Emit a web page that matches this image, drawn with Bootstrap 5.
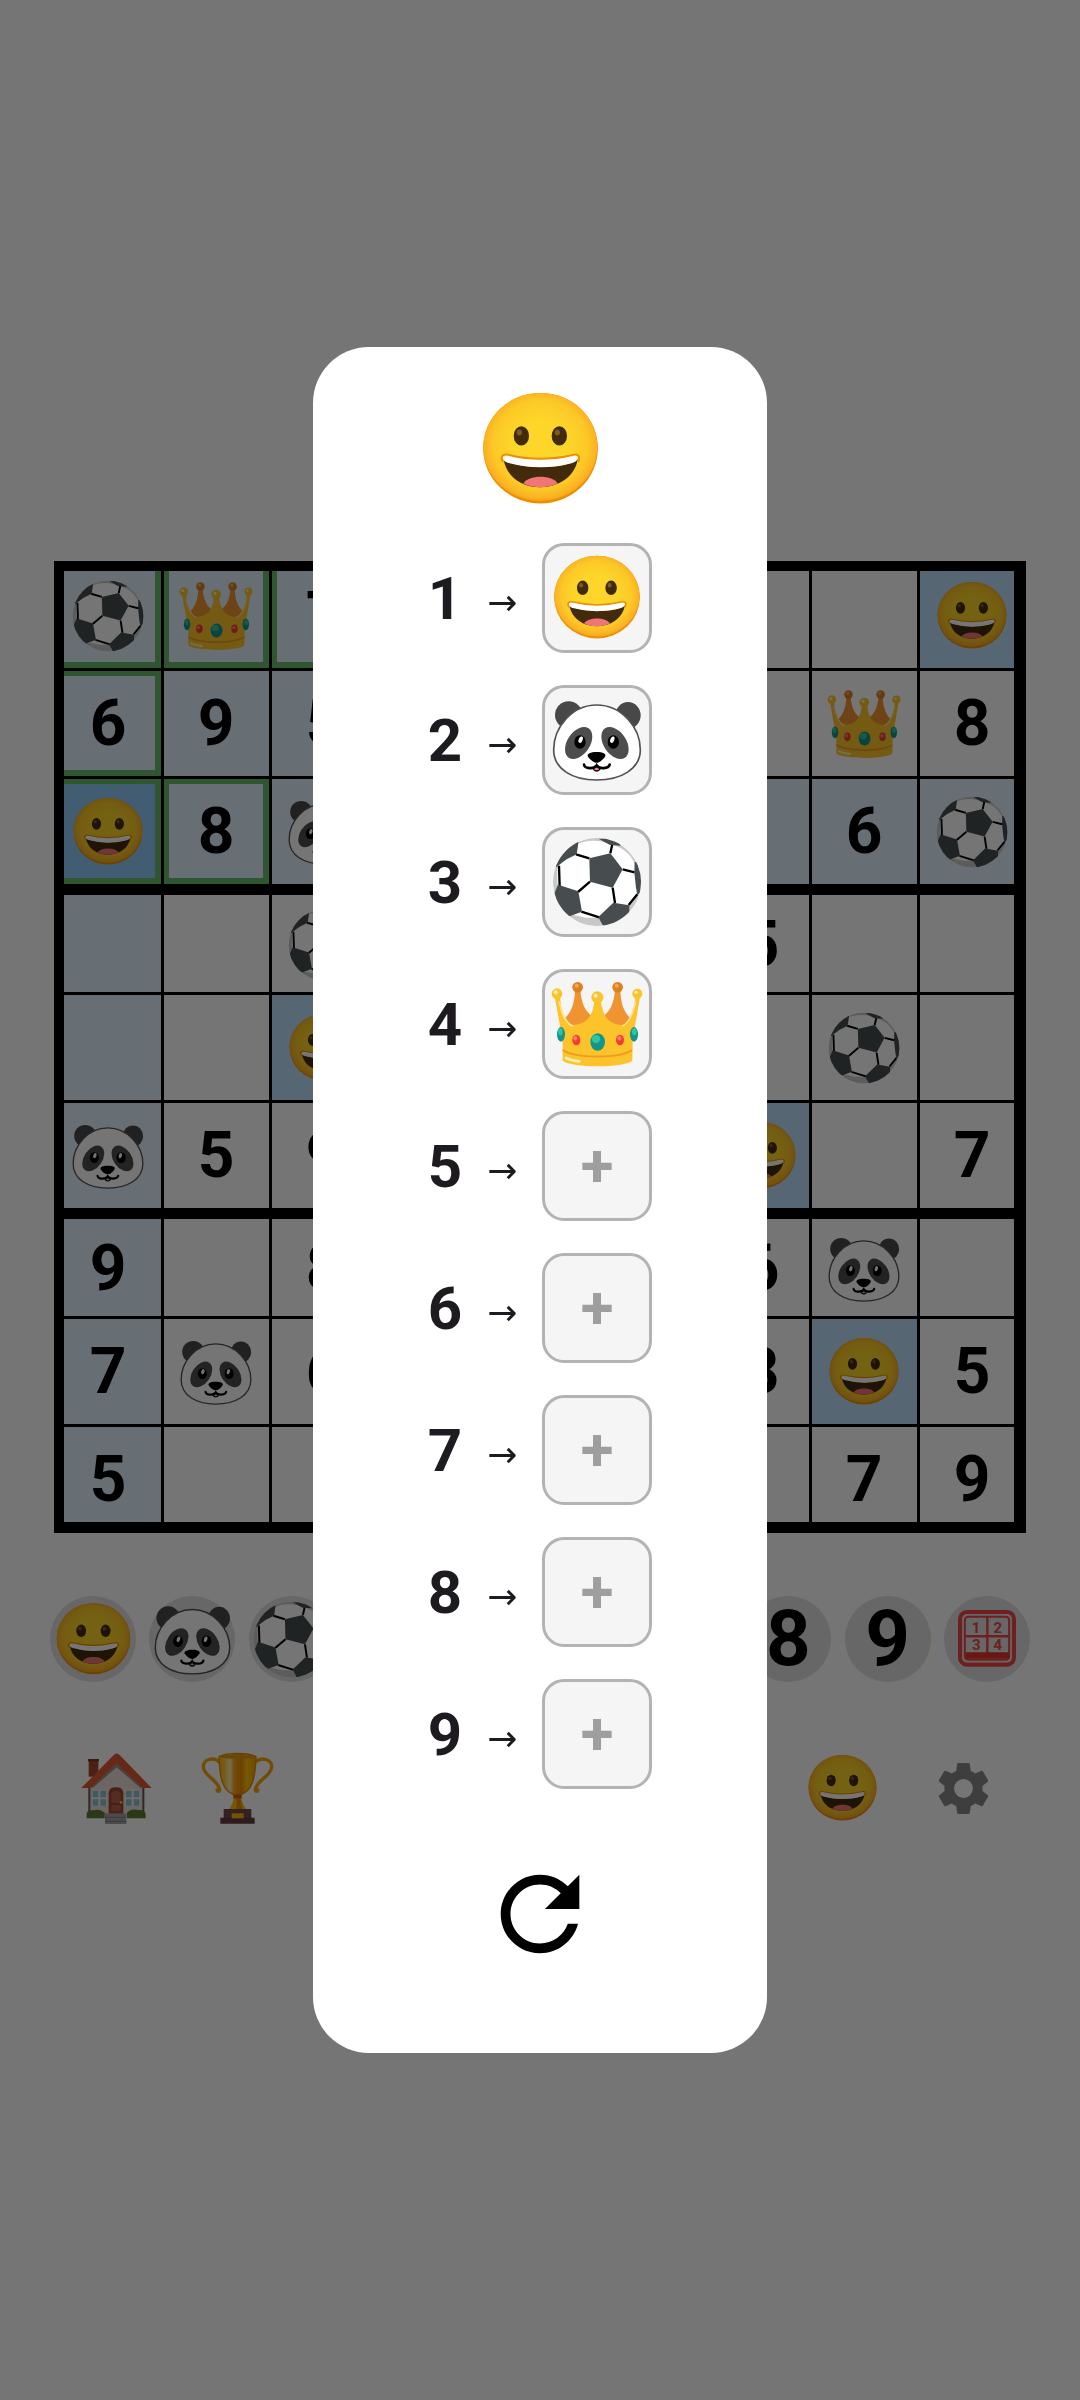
<!DOCTYPE html>
<html lang="en">
<head>
  <meta charset="UTF-8">
  <meta name="viewport" content="width=device-width, initial-scale=1">
  <title>Emoji Sudoku</title>
  <link href="https://cdn.jsdelivr.net/npm/bootstrap@5.3.3/dist/css/bootstrap.min.css" rel="stylesheet">
  <style>
    body { font-family: Roboto, "Liberation Sans", sans-serif; background: #fff; }
    button { background: none; border: 0; padding: 0; color: #000; }
    svg { display: block; }

    .board-wrap { padding: 0 54px; margin-bottom: 63px; }
    .board { display: grid; grid-template-columns: repeat(9, 1fr); }
    .cell {
      --t: 2px; --l: 2px; --b: -1px; --r: -1px; --ring: 0px;
      aspect-ratio: 1;
      display: flex; align-items: center; justify-content: center;
      font-size: 64px; font-weight: 700; line-height: 1;
      padding-top: 2px;
      box-shadow: inset var(--l) var(--t) #000, inset var(--r) var(--b) #000, inset 0 0 0 var(--ring) #66bb6a;
    }
    .cell svg { width: 74px; height: 74px; }
    .cell.top { --t: 10px; }
    .cell.left { --l: 10px; }
    .cell.pad-y { padding-top: 12px; }
    .cell.pad-x { padding-left: 10px; }
    .cell.last-row { --b: -11px; }
    .cell.last-col { --r: -12px; }
    .cell.peer { background: #e3f2fd; }
    .cell.same { background: #bbdefb; }
    .cell.picked { background: #90caf9; }
    .cell.ringed { --ring: 7px; }

    .keys { padding: 0 50px; margin-bottom: 55px; }
    .key {
      width: 86px; height: 86px; border-radius: 50%; background: #e0e0e0;
      display: flex; align-items: center; justify-content: center;
      font-size: 78px; font-weight: 700; line-height: 1;
    }
    .key svg { width: 79px; height: 79px; }
    .key .grid-icon { width: 58px; height: 58px; }

    .tools { padding: 0 56px; }
    .tool { width: 121px; height: 102px; display: flex; align-items: center; justify-content: center; }
    .tool svg { width: 73px; height: 73px; }
    .tool .gear { width: 61px; height: 61px; }

    .modal-backdrop.show { opacity: .54; }
    .picker { max-width: 454px; }
    .picker .modal-content { border: 0; border-radius: 56px; padding: 41px 0 80px; }
    .head-face { width: 123px; height: 123px; margin-bottom: 32px; }
    .maps { gap: 32px; margin-bottom: 66px; }
    .map-row { gap: 22px; color: #1d1b20; line-height: 1; }
    .map-num { font-size: 60px; font-weight: 700; padding-top: 2px; }
    .map-arrow { width: 36px; font-family: "DejaVu Sans", sans-serif; font-size: 36px; padding-top: 10px; text-align: center; }
    .slot {
      width: 110px; height: 110px; border: 3px solid #b3b3b3; border-radius: 22px; background: #f5f5f5;
      display: flex; align-items: center; justify-content: center;
      color: #9e9e9e; font-size: 60px; font-weight: 700; line-height: 1;
    }
    .slot svg { width: 92px; height: 92px; }
    .reset svg { width: 118px; height: 118px; }
  </style>
</head>
<body>

<svg width="0" height="0" class="position-absolute" aria-hidden="true">
  <defs>
    <radialGradient id="faceFill" cx=".5" cy=".48" r=".53">
      <stop offset=".45" stop-color="#fdd629"/>
      <stop offset=".78" stop-color="#fcc827"/>
      <stop offset=".94" stop-color="#fbb021"/>
      <stop offset="1" stop-color="#f79a1a"/>
    </radialGradient>
    <linearGradient id="cupFill">
      <stop offset="0" stop-color="#ffb300"/>
      <stop offset=".15" stop-color="#ffc93c"/>
      <stop offset=".3" stop-color="#fff0b8"/>
      <stop offset=".4" stop-color="#f9a825"/>
      <stop offset=".6" stop-color="#f08c00"/>
      <stop offset=".75" stop-color="#ffc107"/>
      <stop offset="1" stop-color="#f0a000"/>
    </linearGradient>
    <clipPath id="ballClip"><circle cx="133" cy="133" r="132"/></clipPath>
  </defs>

  <symbol id="face" viewBox="0 0 276 276">
    <g transform="translate(9 11) scale(.748)">
      <ellipse cx="172.500" cy="166" rx="172" ry="166" fill="#eb8f00"/>
      <ellipse cx="172" cy="162" rx="171" ry="162" fill="url(#faceFill)"/>
      <ellipse cx="115" cy="129" rx="23" ry="29" fill="#422b0d"/>
      <ellipse cx="229" cy="129" rx="23" ry="29" fill="#422b0d"/>
      <ellipse cx="109" cy="119" rx="8" ry="9" fill="#7a5c1e"/>
      <ellipse cx="223" cy="119" rx="8" ry="9" fill="#7a5c1e"/>
      <path d="M62 200C70 250 115 283 172 283S276 250 284 200C250 222 210 222 172 222S100 218 62 200z" fill="#422b0d"/>
      <path d="M121 272C135 245 210 245 224 272C192 287 152 287 121 272z" fill="#ef7674"/>
      <path d="M60 197C58 186 66 184 78 188Q172 210 268 188C280 184 287 186 284 197C282 205 275 208 265 211Q172 235 80 211C68 208 62 205 60 197z" fill="#fff"/>
      <path d="M59 205C50 188 64 182 78 186Q172 209 268 186C282 182 294 188 286 205" fill="none" stroke="#eb8f00" stroke-width="6" stroke-linecap="round"/>
    </g>
  </symbol>

  <symbol id="panda" viewBox="0 0 276 276">
    <g transform="translate(5 20)">
      <circle cx="48" cy="43" r="41" fill="#484848"/>
      <ellipse cx="226" cy="44" rx="38" ry="40" fill="#484848"/>
      <path d="M3 147C3 80 58 13 132 13S263 80 263 147C263 205 205 238 132 238S3 205 3 147z" fill="#fff" stroke="#525252" stroke-width="5"/>
      <ellipse cx="78" cy="127" rx="34" ry="53" transform="rotate(34 78 127)" fill="#4d4d4d"/>
      <ellipse cx="187" cy="127" rx="34" ry="53" transform="rotate(-34 187 127)" fill="#4d4d4d"/>
      <ellipse cx="82" cy="124" rx="17" ry="20" fill="#000"/>
      <ellipse cx="182" cy="124" rx="17" ry="20" fill="#000"/>
      <ellipse cx="84" cy="117" rx="6" ry="10" transform="rotate(20 84 117)" fill="#fff"/>
      <ellipse cx="179" cy="117" rx="6" ry="10" transform="rotate(20 179 117)" fill="#fff"/>
      <path d="M132 154C150 154 163 160 157 168C150 178 140 186 132 186S113 178 106 168C101 160 114 154 132 154z" fill="#000"/>
      <path d="M119 200Q132 194 145 200Q144 212 132 213Q120 212 119 200z" fill="#000"/>
      <path d="M124 204Q132 196 140 204Q139 209 132 209Q125 209 124 204z" fill="#f48a94"/>
      <path d="M94 192C96 205 125 206 132 194C139 206 168 205 171 192" fill="none" stroke="#000" stroke-width="8" stroke-linecap="round"/>
    </g>
  </symbol>

  <symbol id="ball" viewBox="0 0 276 276">
    <g transform="translate(5 5)" clip-path="url(#ballClip)">
      <circle cx="133" cy="133" r="133" fill="#c8c8c8"/>
      <path d="M72 20C100 6 145 6 172 20C205 25 235 50 246 78C258 110 262 150 248 180C230 215 190 238 140 240L100 240L52 230C20 190 10 150 15 88z" fill="#fff"/>
      <g fill="none" stroke="#000" stroke-width="7">
        <path d="M70 50L110 62M173 47L179 20M210 95L246 104M180 150L187 196M112 132L76 163M86 222L140 239M19 84L21 146M228 202L254 170"/>
      </g>
      <g fill="#474c4f">
        <path d="M110 62L173 47L210 95L180 150L112 132z"/>
        <path d="M78 10L72 50L42 65L8 90L0 60L50 0z"/>
        <path d="M16 141L77 161L88 222L44 238L0 230L4 170z"/>
        <path d="M137 238L182 195L230 203L230 245L153 268z"/>
        <path d="M246 73L268 75L270 160L254 172L250 150L245 105z"/>
        <path d="M138 3L205 0L203 24L172 22z"/>
      </g>
    </g>
  </symbol>

  <symbol id="crown" viewBox="0 0 276 276">
    <g transform="translate(3 12)">
      <path d="M69 24H85C88 60 98 90 125 105V150H30V115C60 95 68 60 69 24z" fill="#ef9430"/>
      <path d="M189 24H205C206 60 214 95 244 115V150H149V105C176 90 186 60 189 24z" fill="#ef9430"/>
      <circle cx="77" cy="16" r="16" fill="#dd8120"/><circle cx="197" cy="16" r="16" fill="#dd8120"/>
      <circle cx="74" cy="11" r="6" fill="#f5a94f"/><circle cx="194" cy="11" r="6" fill="#f5a94f"/>
      <path d="M8 44L24 44C28 90 38 124 62 129C102 128 122 105 127 58H147C152 105 172 128 210 129C236 124 246 90 250 44L264 44L242 175L241 236C215 258 60 258 32 236L32 175z" fill="#fcc42a"/>
      <path d="M22 60C30 98 40 122 62 132M250 60C242 98 232 122 212 132" fill="none" stroke="#fee38a" stroke-width="5" stroke-linecap="round"/>
      <circle cx="15" cy="35" r="16" fill="#fcc42a"/><circle cx="136" cy="46" r="18" fill="#fcc42a"/><circle cx="256" cy="35" r="15" fill="#fcc42a"/>
      <circle cx="11" cy="31" r="6" fill="#fff2b3"/><circle cx="131" cy="41" r="6" fill="#fff2b3"/><circle cx="252" cy="31" r="5" fill="#fff2b3"/>
      <path d="M32 204C70 230 205 230 240 204" fill="none" stroke="#ee9b22" stroke-width="6"/>
      <path d="M42 228Q58 236 82 238" fill="none" stroke="#fff2b3" stroke-width="8" stroke-linecap="round"/>
      <ellipse cx="137" cy="180" rx="22" ry="26" fill="#159588"/><ellipse cx="132" cy="171" rx="13" ry="12" fill="#2fc4a2"/>
      <ellipse cx="27" cy="157" rx="12" ry="22" fill="#159588"/><ellipse cx="25" cy="149" rx="7" ry="11" fill="#2fc4a2"/>
      <ellipse cx="246" cy="157" rx="12" ry="22" fill="#159588"/><ellipse cx="247" cy="149" rx="7" ry="11" fill="#2fc4a2"/>
      <ellipse cx="73" cy="174" rx="12" ry="16" fill="#f23c35"/><ellipse cx="70" cy="169" rx="6" ry="7" fill="#ff7b6b"/>
      <ellipse cx="204" cy="174" rx="12" ry="16" fill="#f23c35"/><ellipse cx="202" cy="169" rx="6" ry="7" fill="#ff7b6b"/>
    </g>
  </symbol>

  <symbol id="house" viewBox="-4 -4 219 219">
    <path d="M22 18H51V70H22z" fill="#a8472c"/><path d="M20 17H53V24H20z" fill="#7d3a28"/>
    <path d="M21 190V98L106 28L189 98V190z" fill="#e9ded7"/>
    <path d="M21 98H27V175H21zM183 98H189V175H183z" fill="#6a5a55"/>
    <path d="M106 20L24 98L34 104L106 42L178 104L188 98z" fill="#a08c84"/>
    <path d="M0 104L98 4Q106 -3 114 4L211 104H184L106 29L27 104z" fill="#e0582f"/>
    <path d="M82 185V118Q84 102 104 102T126 118V185z" fill="#a04433"/>
    <path d="M90 148V121Q92 112 104 112T118 121V148zM90 155H118V174H90z" fill="#b9604a"/>
    <circle cx="119" cy="147" r="4" fill="#ffca28"/>
    <path d="M32 109H76V159H32zM131 109H177V159H131z" fill="#f4efec"/>
    <path d="M34 112H51V132H34zM57 112H74V132H57zM34 138H51V157H34zM57 138H74V157H57zM134 112H151V132H134zM157 112H174V132H157zM134 138H151V157H134zM157 138H174V157H157z" fill="#8cc3cc"/>
    <path d="M16 195V180Q20 168 36 171Q55 165 70 178V195zM137 195V178Q150 165 170 170Q190 168 193 182V195z" fill="#5c7d31"/>
    <path d="M71 180H135V212H71z" fill="#a3a3a3"/><path d="M71 190H135V194H71zM71 202H135V206H71z" fill="#8a8a8a"/>
  </symbol>

  <symbol id="trophy" viewBox="-2 -4 219 219">
    <path d="M56 28C35 8 4 18 5 42C8 70 48 78 54 108C55 116 48 116 46 110M159 28C180 8 211 18 210 42C207 70 167 78 161 108C160 116 167 116 169 110" fill="none" stroke="#f9a60f" stroke-width="10" stroke-linecap="round"/>
    <path d="M96 125H119C119 145 126 158 134 168H82C90 158 96 145 96 125z" fill="#ffc107"/>
    <path d="M106 130H115L122 168H104z" fill="#f08c00"/>
    <path d="M52 10C54 70 60 118 107 127C155 118 161 70 163 10C140 -3 75 -3 52 10z" fill="url(#cupFill)" stroke="#e38d00" stroke-width="4"/>
    <ellipse cx="107" cy="10" rx="50" ry="7" fill="#e79a12"/>
    <path d="M95 124H120V135H95z" fill="#d9571e"/>
    <path d="M66 167H149V195H66z" fill="#74484a"/><path d="M56 193H159V211H56z" fill="#633b3f"/>
    <path d="M90 180H126V195H90z" fill="#f5b60a"/>
  </symbol>

  <symbol id="gear" viewBox="0 0 24 24">
    <path fill="#888" d="M19.430 12.980c.04-.32.07-.64.07-.98s-.03-.66-.07-.98l2.110-1.650c.19-.15.24-.42.12-.64l-2-3.460c-.12-.22-.39-.3-.61-.22l-2.490 1c-.52-.4-1.080-.73-1.690-.98l-.38-2.650C14.460 2.180 14.250 2 14 2h-4c-.25 0-.46.18-.49.42l-.38 2.650c-.61.25-1.170.59-1.690.98l-2.490-1c-.23-.09-.49 0-.61.22l-2 3.460c-.13.22-.07.49.12.64l2.110 1.650c-.04.32-.07.65-.07.98s.03.66.07.98l-2.110 1.650c-.19.15-.24.42-.12.64l2 3.460c.12.22.39.3.61.22l2.490-1c.52.4 1.080.73 1.690.98l.38 2.650c.03.24.24.42.49.42h4c.25 0 .46-.18.49-.42l.38-2.650c.61-.25 1.170-.59 1.690-.98l2.490 1c.23.09.49 0 .61-.22l2-3.460c.12-.22.07-.49-.12-.64l-2.110-1.650zM12 15.700a3.700 3.700 0 1 1 0-7.400 3.700 3.700 0 0 1 0 7.400z"/>
  </symbol>

  <symbol id="refresh" viewBox="0 0 24 24">
    <path d="M17.650 6.350C16.200 4.900 14.210 4 12 4c-4.420 0-7.990 3.580-7.990 8s3.570 8 7.990 8c3.730 0 6.840-2.550 7.730-6h-2.080c-.82 2.330-3.040 4-5.650 4-3.310 0-6-2.690-6-6s2.690-6 6-6c1.660 0 3.140.69 4.220 1.780L13 11h7V4l-2.350 2.350z"/>
  </symbol>
</svg>

<main class="min-vh-100 d-flex flex-column justify-content-center">
  <div class="board-wrap">
    <div class="board" id="board"></div>
  </div>

  <div class="keys d-flex justify-content-between" id="keys">
    <button type="button" class="key" aria-label="Notes">
      <svg class="grid-icon" viewBox="0 0 170 170">
        <rect x="6" y="6" width="158" height="154" rx="20" fill="none" stroke="#ef4444" stroke-width="12"/>
        <rect x="20" y="20" width="130" height="126" rx="10" fill="none" stroke="#ef4444" stroke-width="6"/>
        <path d="M86 20V128M22 77H150" stroke="#ef4444" stroke-width="7"/>
        <path d="M22 124H150V143H22z" fill="#e5342b"/>
        <g fill="#ef4444" font-weight="700" font-size="44" text-anchor="middle">
          <text x="53" y="66">1</text><text x="117" y="66">2</text><text x="54" y="118">3</text><text x="117" y="118">4</text>
        </g>
      </svg>
    </button>
  </div>

  <nav class="tools d-flex justify-content-between">
    <div class="d-flex">
      <button type="button" class="tool" aria-label="Home"><svg><use href="#house"/></svg></button>
      <button type="button" class="tool" aria-label="Scores"><svg><use href="#trophy"/></svg></button>
    </div>
    <div class="d-flex">
      <button type="button" class="tool" aria-label="Emoji"><svg><use href="#face"/></svg></button>
      <button type="button" class="tool" aria-label="Settings"><svg class="gear"><use href="#gear"/></svg></button>
    </div>
  </nav>
</main>

<div class="modal-backdrop show"></div>
<div class="modal show d-block" tabindex="-1" role="dialog" aria-modal="true" aria-label="Emoji">
  <div class="modal-dialog modal-dialog-centered picker">
    <div class="modal-content align-items-center">
      <svg class="head-face"><use href="#face"/></svg>
      <div class="maps d-flex flex-column" id="maps"></div>
      <button type="button" class="reset" aria-label="Reset"><svg><use href="#refresh"/></svg></button>
    </div>
  </div>
</div>

<script src="https://cdn.jsdelivr.net/npm/bootstrap@5.3.3/dist/js/bootstrap.bundle.min.js"></script>
<script>
  const emoji = { 1: "face", 2: "panda", 3: "ball", 4: "crown" };

  // one string per row, a dot is an empty cell
  const rows = [
    "347.....1",
    "695....48",
    "182....63",
    "..3...5..",
    "..1....3.",
    "259...1.7",
    "9.8...62.",
    "726...815",
    "5......79"
  ];
  const ringed = ["00", "01", "02", "10", "20", "21"];

  function glyph(value) {
    return emoji[value] ? `<svg role="img" aria-label="${value}"><use href="#${emoji[value]}"/></svg>` : value;
  }

  function cellClass(r, c, value) {
    const cls = ["cell"];
    if (r % 3 === 0) cls.push("top");
    if (c % 3 === 0) cls.push("left");
    if (r === 3 || r === 6) cls.push("pad-y");
    if (c === 3 || c === 6) cls.push("pad-x");
    if (r === 8) cls.push("last-row");
    if (c === 8) cls.push("last-col");

    if (r === 2 && c === 0) cls.push("picked");
    else if (value === "1") cls.push("same");
    else if (r === 2 || c === 0 || (r < 3 && c < 3)) cls.push("peer");

    if (ringed.includes(`${r}${c}`)) cls.push("ringed");
    return cls.join(" ");
  }

  let cells = "";
  rows.forEach((row, r) => {
    [...row].forEach((value, c) => {
      const content = value === "." ? "" : glyph(value);
      cells += `<button type="button" class="${cellClass(r, c, value)}" aria-label="Row ${r + 1}, column ${c + 1}">${content}</button>`;
    });
  });
  document.getElementById("board").innerHTML = cells;

  let keys = "";
  let maps = "";
  for (let n = 1; n <= 9; n++) {
    keys += `<button type="button" class="key">${glyph(n)}</button>`;
    maps += `
      <div class="map-row d-flex align-items-center">
        <span class="map-num">${n}</span>
        <span class="map-arrow">→</span>
        <button type="button" class="slot" aria-label="Emoji for ${n}">${emoji[n] ? glyph(n) : "+"}</button>
      </div>`;
  }
  document.getElementById("keys").insertAdjacentHTML("afterbegin", keys);
  document.getElementById("maps").innerHTML = maps;
</script>

</body>
</html>
